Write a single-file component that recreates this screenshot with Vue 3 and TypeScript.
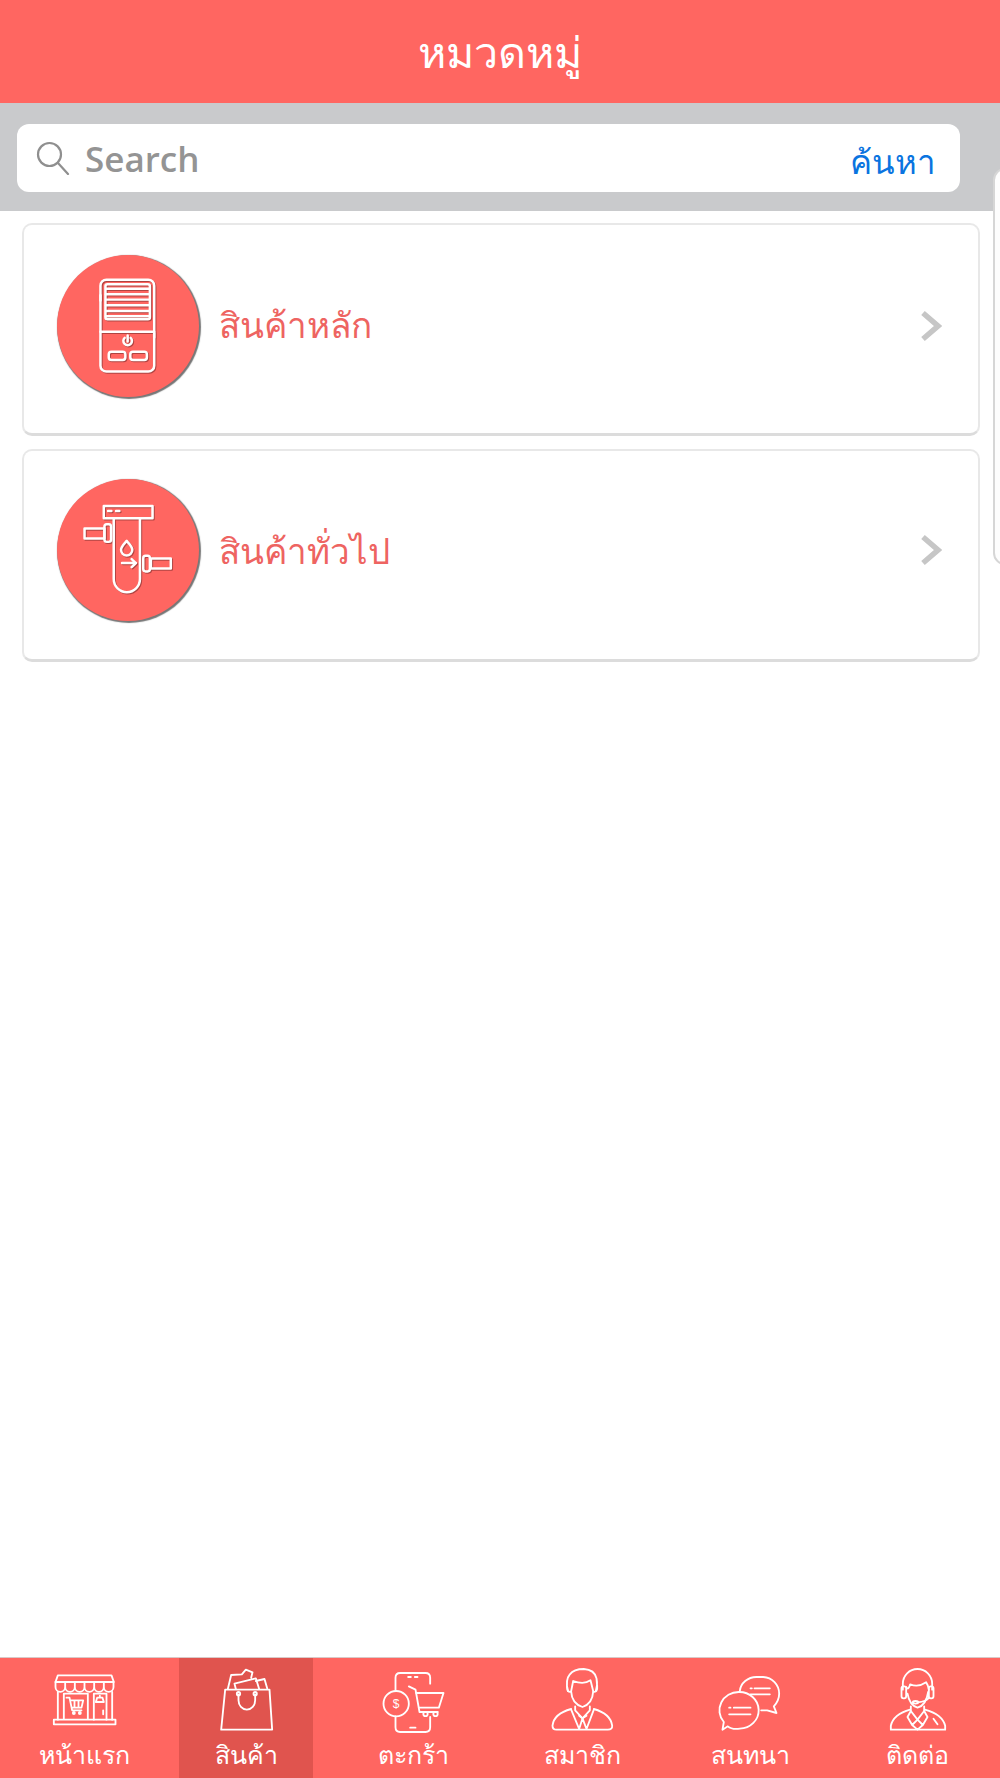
<script setup lang="ts">
const tabs = [
  { key: 'home', label: 'หน้าแรก' },
  { key: 'bag', label: 'สินค้า' },
  { key: 'cart', label: 'ตะกร้า' },
  { key: 'member', label: 'สมาชิก' },
  { key: 'chat', label: 'สนทนา' },
  { key: 'support', label: 'ติดต่อ' },
]
const louvers = [205, 222, 238, 255, 272, 288]
</script>

<template>
  <div class="page">
    <header class="title-bar">หมวดหมู่</header>
    <div class="search-band">
      <div class="search-box">
        <svg class="search-icon" viewBox="0 0 34 34" fill="none" stroke="#8f8f8f" stroke-width="2.2">
          <circle cx="13.5" cy="13.5" r="11.5" />
          <path d="M22 22 32 33" stroke-linecap="round" />
        </svg>
        <span class="search-text">Search</span>
        <span class="search-go">ค้นหา</span>
      </div>
    </div>

    <main class="cards">
      <section class="card">
        <div class="badge">
          <svg viewBox="112 105 428 425" fill="none" stroke="#fff" stroke-width="7.5" stroke-linecap="round" stroke-linejoin="round">
            <rect x="243" y="178" width="162" height="277" rx="18" />
            <rect x="258" y="192" width="134" height="105" rx="6" />
            <path v-for="y in louvers" :key="y" :d="`M260 ${y}H390`" />
            <path d="M243 335H405M243 225v16M405 338v14" />
            <path d="M316 353a13 13 0 1 0 18 0M325 346v18" />
            <rect x="268" y="395" width="50" height="25" rx="8" />
            <rect x="333" y="395" width="50" height="25" rx="8" />
          </svg>
        </div>
        <span class="card-label">สินค้าหลัก</span>
        <svg class="chevron" viewBox="0 0 22 32" fill="none" stroke="#c6c6c6" stroke-width="5.5">
          <path d="M3 3 18 16 3 29" />
        </svg>
      </section>
      <section class="card">
        <div class="badge">
          <svg viewBox="112 105 428 425" fill="none" stroke="#fff" stroke-width="7.5" stroke-linecap="round" stroke-linejoin="round">
            <rect x="253" y="185" width="147" height="37" />
            <path d="M266 200h10M290 200h10" />
            <path d="M283 222V405a39.500 39.500 0 0 0 79 0V222" />
            <rect x="195" y="253" width="60" height="30" />
            <rect x="255" y="240" width="20" height="53" rx="7" />
            <rect x="395" y="343" width="60" height="30" />
            <rect x="372" y="335" width="20" height="47" rx="7" />
            <path d="M322 290c-8 10-17 17-17 27a17 17 0 0 0 34 0c0-10-9-17-17-27Z" />
            <path d="M308 357H350M337 345 350 357 337 369" />
          </svg>
        </div>
        <span class="card-label">สินค้าทั่วไป</span>
        <svg class="chevron" viewBox="0 0 22 32" fill="none" stroke="#c6c6c6" stroke-width="5.5">
          <path d="M3 3 18 16 3 29" />
        </svg>
      </section>
    </main>

    <div class="edge-panel"></div>

    <nav class="tab-bar">
      <div v-for="t in tabs" :key="t.key" class="tab" :class="[`tab-${t.key}`, { active: t.key === 'bag' }]">
        <svg v-if="t.key === 'home'" class="tab-icon" viewBox="152 50 200 195" fill="none" stroke="#fff" stroke-width="5.500" stroke-linejoin="round" stroke-linecap="round">
          <path d="M165 95 172 75H333L340 95Z" />
          <path d="M165 95v15a14.500 14.500 0 0 0 29 0 14.500 14.500 0 0 0 29 0 14.500 14.500 0 0 0 29 0 14.500 14.500 0 0 0 29 0 14.500 14.500 0 0 0 29 0 14.500 14.500 0 0 0 29 0V95M194 95v15M223 95v15M252 95v15M281 95v15M310 95v15" />
          <path d="M172 125V208M335 125V208" />
          <path d="M190 205V130H262V205" />
          <path d="M280 208V130H318V208" />
          <rect x="160" y="208" width="185" height="14" />
          <path d="M198 142h9l8 38h28M210 150H248L243 172H214M222 150v22M234 150v22" />
          <circle cx="220" cy="188" r="3" />
          <circle cx="238" cy="188" r="3" />
          <path d="M286 155H310L306 142H290ZM298 142v-6M308 180v12" />
        </svg>

        <svg v-else-if="t.key === 'bag'" class="tab-icon" viewBox="636 50 200 195" fill="none" stroke="#fff" stroke-width="5.500" stroke-linejoin="round" stroke-linecap="round">
          <path d="M672 118H805L813 238H660Z" />
          <path d="M712 132V150a25 28 0 0 0 50 0V132" />
          <circle cx="712" cy="130" r="5" />
          <circle cx="762" cy="130" r="5" />
          <path d="M680 116 690 74 722 72 734 58 754 66 750 82M704 116 700 100 764 84 774 116M764 92 790 86 798 114" />
        </svg>

        <svg v-else-if="t.key === 'cart'" class="tab-icon" viewBox="122 50 200 195" fill="none" stroke="#fff" stroke-width="5.500" stroke-linejoin="round" stroke-linecap="round">
          <path d="M168 122V82Q168 68 182 68H258Q272 68 272 82V100M168 198V231Q168 245 182 245H258Q272 245 272 231V200" />
          <path d="M212 232h16M206 80h8M226 80h8" />
          <circle cx="170" cy="160" r="38" />
          <text x="170" y="173" text-anchor="middle" class="dollar">$</text>
          <path d="M208 108 228 118 240 185H295" />
          <path d="M230 128H312L298 172H238" />
          <circle cx="258" cy="191" r="6.500" />
          <circle cx="288" cy="191" r="6.500" />
        </svg>

        <svg v-else-if="t.key === 'member'" class="tab-icon" viewBox="626 50 200 195" fill="none" stroke="#fff" stroke-width="5.500" stroke-linejoin="round" stroke-linecap="round">
          <path d="M682 122Q674 88 688 72 700 56 730 56 762 58 768 84 772 104 766 122" />
          <path d="M680 110Q680 128 692 124 694 160 726 170 756 160 758 124 772 128 770 106" />
          <path d="M692 122 698 92Q730 104 750 90L758 122" />
          <path d="M704 168V180L726 204 748 180V168" />
          <path d="M692 176Q640 190 636 226 636 238 648 238H802Q816 238 815 226 810 190 760 176" />
          <path d="M692 178 716 236 726 204 738 236 760 178M716 196 726 204 738 196" />
        </svg>

        <svg v-else-if="t.key === 'chat'" class="tab-icon" viewBox="172 50 200 195" fill="none" stroke="#fff" stroke-width="5.500" stroke-linejoin="round" stroke-linecap="round">
          <path d="M240 122A50 46 0 0 1 290 80H310A50 50 0 0 1 358 130Q358 150 342 168L350 188 322 180H304" />
          <path d="M237 125A58 55 0 0 1 240 235Q215 238 204 228L188 238 192 215A58 55 0 0 1 237 125Z" />
          <path d="M272 114h4M284 114H330M272 132H330" />
          <path d="M208 172h4M222 172H272M208 192H272" />
        </svg>

        <svg v-else class="tab-icon" viewBox="672 50 200 195" fill="none" stroke="#fff" stroke-width="5.500" stroke-linejoin="round" stroke-linecap="round">
          <path d="M728 118V100A44 44 0 0 1 816 100V118" />
          <rect x="724" y="108" width="14" height="36" rx="6" />
          <rect x="806" y="108" width="14" height="36" rx="6" />
          <path d="M738 110Q745 122 750 102 775 112 798 96 804 104 806 118" />
          <path d="M742 130Q748 165 772 172 798 165 804 125" />
          <path d="M806 142Q800 154 772 156" />
          <ellipse cx="766" cy="156" rx="8" ry="4" />
          <path d="M752 168V182L772 208 792 182V168" />
          <path d="M750 178Q700 192 692 226V238H855V226Q846 192 794 178" />
          <path d="M772 208 756 224 772 238 788 224ZM752 182 742 200 756 224M792 182 802 200 788 224" />
          <path d="M820 205 832 222" />
        </svg>
        <span class="tab-label">{{ t.label }}</span>
      </div>
    </nav>
  </div>
</template>

<style scoped>
.page {
  position: relative;
  width: 1000px;
  height: 1778px;
  display: flex;
  flex-direction: column;
  background: #fff;
  overflow: hidden;
  font-family: "Noto Sans", "Open Sans", "DejaVu Sans", sans-serif;
}
.title-bar {
  height: 103px;
  flex: none;
  background: #ff6661;
  color: #fff;
  font-size: 43px;
  line-height: 103px;
  text-align: center;
}
.search-band {
  height: 108px;
  flex: none;
  background: #c9cacc;
  padding: 21px 40px 0 17px;
  box-sizing: border-box;
}
.search-box {
  height: 68px;
  background: #fff;
  border-radius: 12px;
  display: flex;
  align-items: center;
  padding: 0 24px 0 19px;
}
.search-icon {
  width: 34px;
  height: 34px;
  margin-right: 15px;
}
.search-text {
  font-family: "Open Sans", sans-serif;
  font-size: 35px;
  font-weight: 600;
  color: #949494;
}
.search-go {
  margin-left: auto;
  margin-top: 8px;
  font-size: 33px;
  color: #0a74e0;
}
.cards {
  flex: 1;
  padding: 12px 20px 0 22px;
  display: flex;
  flex-direction: column;
  gap: 13px;
}
.card {
  height: 213px;
  box-sizing: border-box;
  border: 2px solid #e8e8e8;
  border-bottom: 3px solid #dcdcdc;
  border-radius: 10px;
  display: flex;
  align-items: center;
  padding: 0 36px 7px 33px;
}
.card + .card {
  padding-bottom: 10px;
}
.card + .card .card-label {
  margin-top: 3px;
}
.badge {
  width: 142px;
  height: 142px;
  border-radius: 50%;
  background: #ff6661;
  box-shadow: 1px 1px 1px 1px #777;
  flex: none;
}
.badge svg {
  display: block;
  width: 100%;
  height: 100%;
  filter: drop-shadow(1px 1px 0 rgba(110, 40, 40, 0.55));
}
.card-label {
  margin-left: 20px;
  font-size: 35px;
  color: #ee6461;
}
.chevron {
  margin-left: auto;
  width: 22px;
  height: 32px;
}
.edge-panel {
  position: absolute;
  left: 993px;
  top: 168px;
  width: 30px;
  height: 397px;
  box-sizing: border-box;
  border: 2px solid #d6d6d6;
  border-radius: 12px;
  background: #fdfdfd;
}
.tab-bar {
  height: 121px;
  flex: none;
  display: flex;
  background: #ff6661;
  border-top: 1px solid #d9c9c8;
  box-sizing: border-box;
}
.tab {
  display: flex;
  flex-direction: column;
  align-items: center;
  box-sizing: border-box;
  padding-top: 9px;
}
.tab-home { width: 179px; padding-right: 11px; }
.tab-bag { width: 134px; }
.tab-cart { width: 200px; }
.tab-member { width: 138px; }
.tab-chat { width: 198px; }
.tab-support { width: 151px; padding-right: 14px; }
.active { background: #e0544e; }
.tab-icon {
  width: 67px;
  height: 65px;
  flex: none;
  overflow: visible;
}
.dollar {
  font-family: "Liberation Sans", sans-serif;
  font-size: 36px;
  fill: #fff;
  stroke: none;
}
.tab-label {
  margin-top: 3px;
  font-size: 25px;
  line-height: 38px;
  color: #fff;
  white-space: nowrap;
}
</style>

<style>
html, body { margin: 0; background: #fff; }
</style>
